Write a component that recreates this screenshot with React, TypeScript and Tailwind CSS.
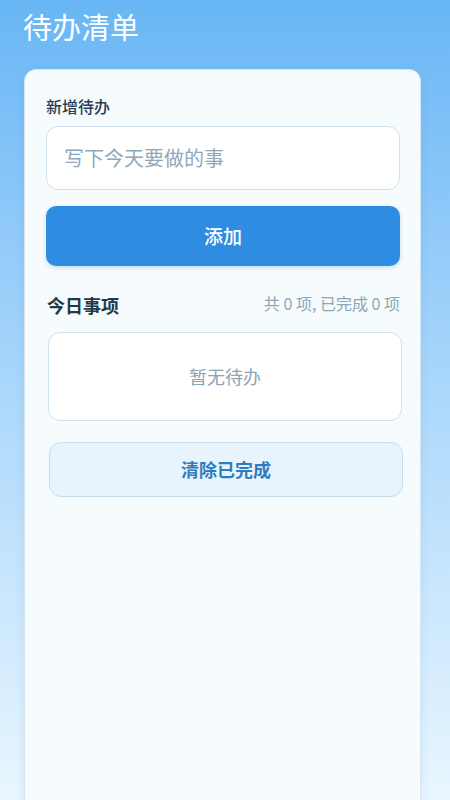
import React from "react";

export default function App() {
  return (
    <div
      className="relative h-[800px] w-full overflow-hidden bg-gradient-to-b from-[#68b6f5] via-[#acd8fb] to-[#e9f6ff]"
      style={{ fontFamily: '"Noto Sans CJK SC", "Noto Sans", sans-serif' }}
    >
      <div className="h-[69px] px-[23px] pt-[8px]">
        <h1 className="text-[29px] leading-[36px] font-normal text-white">待办清单</h1>
      </div>
      <div className="ml-[24px] h-[740px] w-[397px] rounded-t-[12px] border border-[#d6e7f3] bg-[#f6fbfe] pl-[21px] pr-[20px] pt-[24px] shadow-[0_2px_10px_rgba(60,120,170,0.12)]">
        <div className="text-[16px] leading-[24px] font-medium text-[#2a3d4f]">新增待办</div>
        <div className="mt-[8px] flex h-[64px] items-center rounded-[12px] border border-[#cfe1ec] bg-white px-[17px]">
          <span className="text-[20px] text-[#8fa8ba]">写下今天要做的事</span>
        </div>
        <button className="mt-[16px] flex h-[60px] w-full items-center justify-center rounded-[10px] bg-[#2f8ce3] text-[19px] font-medium text-white shadow-[0_2px_4px_rgba(30,100,170,0.2)]">
          添加
        </button>
        <div className="mt-[26px] flex h-[26px] items-center justify-between pl-[1px]">
          <span className="text-[18px] font-bold text-[#22384b]">今日事项</span>
          <span className="-mt-[5px] text-[16px] text-[#8ca6b6]">共 0 项, 已完成 0 项</span>
        </div>
        <div className="ml-[2px] mt-[14px] flex h-[89px] w-[calc(100%+0px)] items-center justify-center rounded-[12px] border border-[#cfe1ec] bg-white">
          <span className="text-[18px] text-[#8ba4b6]">暂无待办</span>
        </div>
        <button className="ml-[3px] mt-[21px] flex h-[55px] w-[calc(100%+0px)] items-center justify-center rounded-[12px] border border-[#c6dcea] bg-[#e8f4fd] text-[18px] font-semibold text-[#2f7cbf]">
          清除已完成
        </button>
      </div>
    </div>
  );
}
